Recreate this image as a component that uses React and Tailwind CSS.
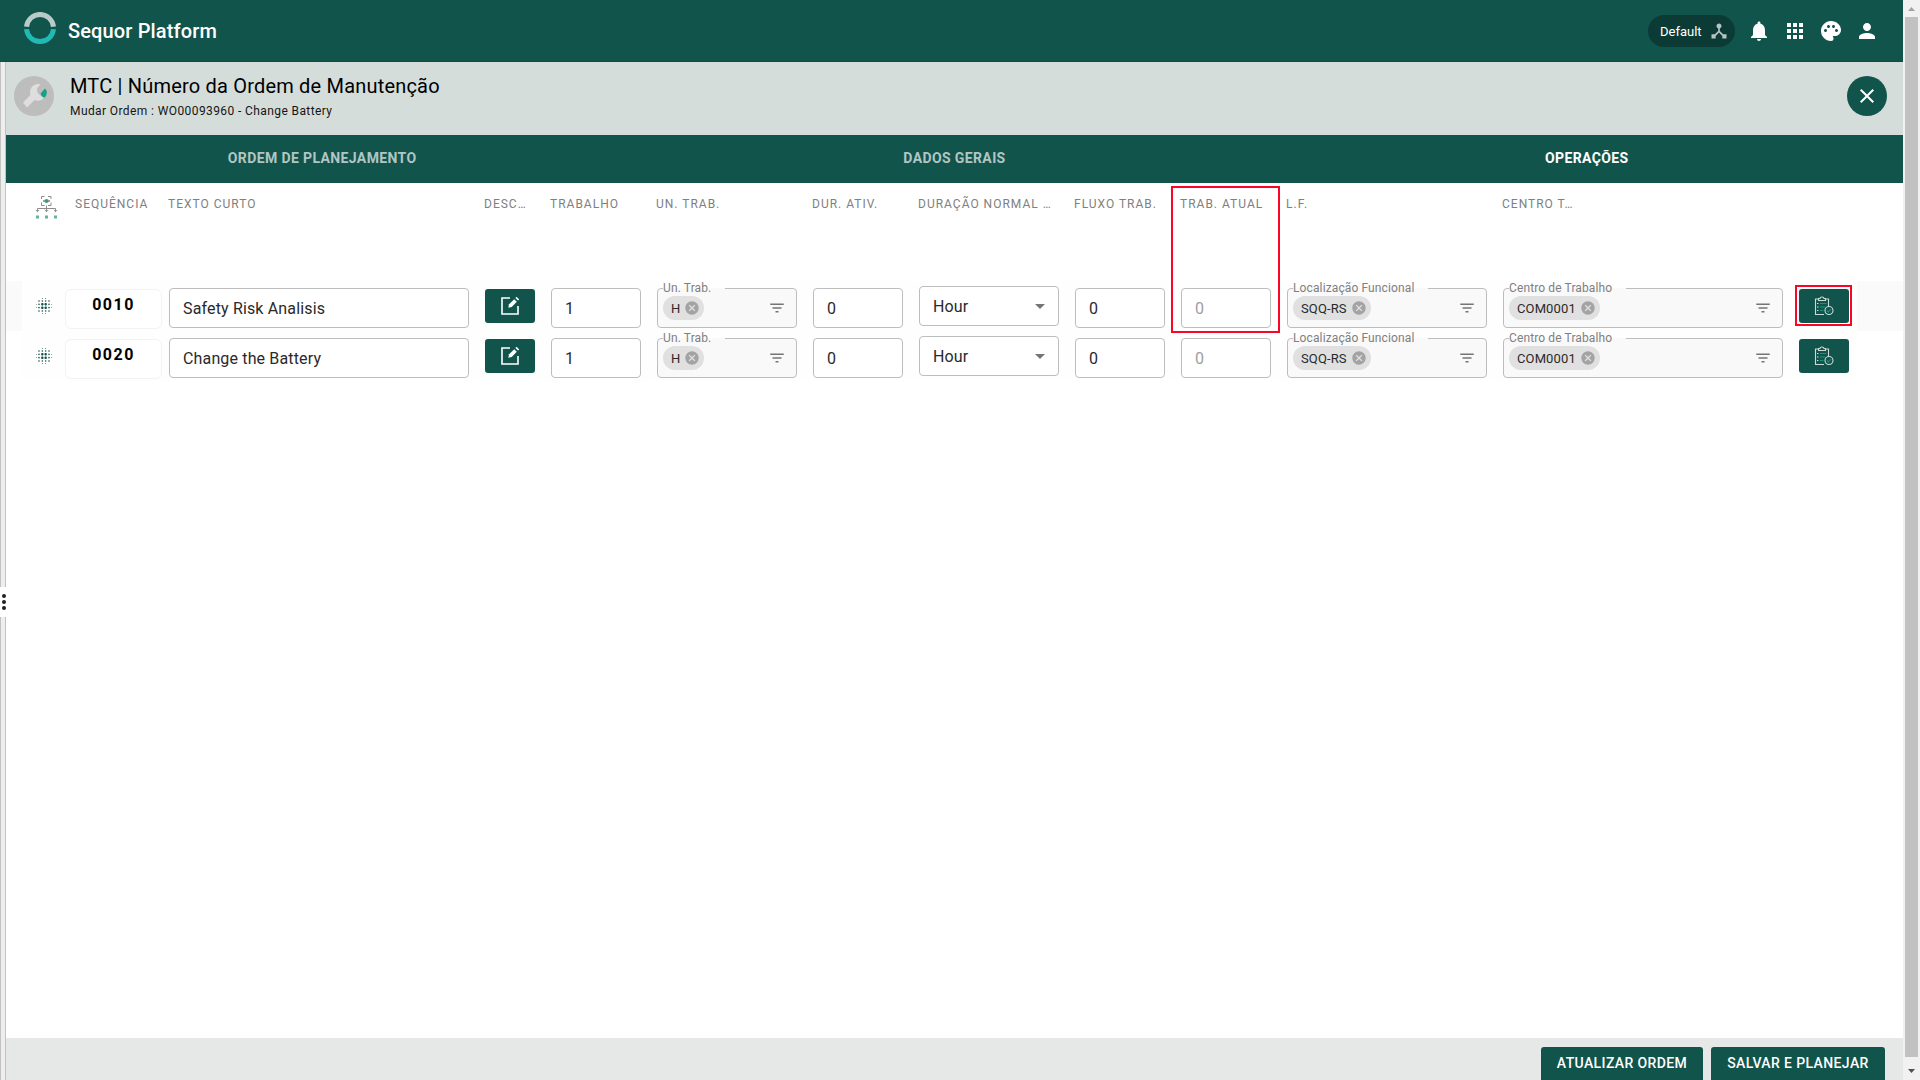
import React from "react";
import {
  MdDeviceHub, MdNotifications, MdApps, MdPalette, MdPerson, MdClose,
  MdFilterList, MdCancel, MdArrowDropDown, MdBlurOn,
} from "react-icons/md";

const columns = [
  { label: "SEQUÊNCIA", width: "w-[93px]" },
  { label: "TEXTO CURTO", width: "w-[316px]" },
  { label: "DESC…", width: "w-[66px]" },
  { label: "TRABALHO", width: "w-[106px]" },
  { label: "UN. TRAB.", width: "w-[156px]" },
  { label: "DUR. ATIV.", width: "w-[106px]" },
  { label: "DURAÇÃO NORMAL …", width: "w-[156px]" },
  { label: "FLUXO TRAB.", width: "w-[106px]" },
  { label: "TRAB. ATUAL", width: "w-[106px]", marked: true },
  { label: "L.F.", width: "w-[216px]" },
  { label: "CENTRO T…", width: "w-[280px]" },
];

const rows = [
  { seq: "0010", text: "Safety Risk Analisis", striped: true },
  { seq: "0020", text: "Change the Battery" },
];

function Logo() {
  return (
    <svg width="32" height="32" viewBox="0 0 32 32" fill="none" className="mt-3 ml-6 shrink-0 self-start" strokeWidth="5">
      <path d="M2.560 14.700A13.500 13.500 0 0 1 29.440 14.700" stroke="#b8cbc8" />
      <path d="M2.540 17.100A13.500 13.500 0 0 0 29.460 17.100" stroke="#20b9b3" />
    </svg>
  );
}

function WrenchIcon() {
  return (
    <svg width="40" height="40" viewBox="0 0 40 40" className="mt-3.5 ml-2 shrink-0">
      <circle cx="20" cy="20" r="20" fill="#bdbdbd" />
      <path d="M9 26.500 16.500 19C14.500 12.500 19.500 6.500 26.500 8.200L23 12.500l.6 4.500 4 3.500h3C28.500 24.500 24.500 25.500 20.500 24L13 31.500Z" fill="#dedede" />
      <path d="M31 12.500c2.500 2.500 2.500 6-.5 9.300-2.500-.8-3.700-2.400-3.900-4.300Z" fill="#10a386" />
    </svg>
  );
}

function HierarchyIcon() {
  return (
    <svg width="24" height="25" viewBox="0 0 24 25" fill="none" stroke="#8c8c8c" strokeWidth="1">
      <path d="M6.500 4V1.500h3M13 1.500h3V4M6.500 7.500v3h3M13 10.500h3v-3M11.500 10.500v3M2.500 16.500v-3h18v3M11.500 13.500v3" />
      <path d="m.8 15 1.700 1.700L4.200 15M9.800 15l1.700 1.700 1.700-1.700M18.800 15l1.700 1.700 1.700-1.700M8 6q3.500-3 7 0q-3.500 3-7 0" />
      <circle cx="11.500" cy="6" r="1.700" fill="#2f9e83" stroke="none" />
      <path d="M1 20.500h3v3H1ZM10 20.500h3v3h-3ZM19 20.500h3v3h-3Z" fill="#63b3a1" stroke="none" />
    </svg>
  );
}

function EditIcon() {
  return (
    <svg width="20" height="20" viewBox="0 0 20 20" fill="none">
      <path d="M10 2H2v16h16v-8" stroke="#fff" strokeWidth="1.600" />
      <path d="m8.300 11.700.8-3.400L14.200 3.200l2.600 2.600-5.100 5.100Z" fill="#fff" />
      <path d="m15.400 2 1.200-1.200 2.600 2.600L18 4.600Z" fill="#fff" />
    </svg>
  );
}

function ChecklistIcon() {
  return (
    <svg width="20" height="20" viewBox="0 0 20 20" fill="none" stroke="#c9d9d6" strokeWidth="1.100">
      <path d="M10 18.500H1.500V3H4M11.500 3H14.500V10M4.500 4.500V2.500H6q0-1.500 2-1.500t2 1.500h1.500v2Z" />
      <circle cx="15" cy="14.500" r="4" />
      <path d="M3 7.500h1.500M3 11h1.500M3 14.500h1.500" />
      <path d="M6 7.500h6.500M6 11h5M6 14.500h3.500" stroke="#16947f" />
      <path d="m13 14.500 1.500 1.500 2.500-3" stroke="#16947f" />
    </svg>
  );
}

const box = "h-10 shrink-0 rounded border border-[#bdbdbd] text-[16px] tracking-[0.15px]";

function Field({ value, width, muted }) {
  return (
    <div className={`${box} ${width} mt-[7px] mr-4 flex items-center bg-white pt-[2px] pl-[13px] ${muted ? "text-[#9e9e9e]" : "text-[#2a2a2a]"}`}>
      {value}
    </div>
  );
}

function ChipField({ label, value, width, gap }) {
  return (
    <div className={`${box} ${width} relative mt-[7px] mr-4 flex items-center justify-between bg-[#f9f9f9] pr-[10px] pl-[5px]`}>
      <div className={`absolute -top-[10px] left-[5px] h-[18px] text-[12px] leading-[18px] tracking-[0.12px] whitespace-nowrap text-[#808080] ${gap}`}>
        <div className="absolute top-[9px] left-0 h-px w-full bg-[#f9f9f9]" />
        <span className="relative">{label}</span>
      </div>
      <div className="flex h-6 items-center rounded-full bg-[#e0e0e0] pr-[4px] pl-2 text-[13px] tracking-[0.12px] text-[#2a2a2a]">
        <span className="pt-px">{value}</span>
        <MdCancel size={16} color="#a3a3a3" className="ml-1" />
      </div>
      <MdFilterList size={18} color="#757575" />
    </div>
  );
}

function Row({ row }) {
  return (
    <div className={`flex h-[50px] ${row.striped ? "bg-[#fafafa]" : "bg-white"}`}>
      <div className="ml-4 flex w-[1835px] bg-[#fefefe]">
        <div className="w-[43px] shrink-0 pt-[15px] pl-3">
          <MdBlurOn size={20} color="#11544c" />
        </div>
        <div className="mt-2 mr-[7px] h-10 w-[97px] shrink-0 rounded-md border border-[#f3f3f3] bg-white pt-[3px] text-center text-[16px] leading-6 font-bold tracking-[1.5px] text-black">
          {row.seq}
        </div>
        <Field value={row.text} width="w-[300px]" />
        <button className="mt-2 mr-4 flex h-[34px] w-[50px] shrink-0 items-center justify-center rounded-[3px] bg-[#11544c]">
          <EditIcon />
        </button>
        <Field value="1" width="w-[90px]" />
        <ChipField label="Un. Trab." value="H" width="w-[140px]" gap="w-[62px]" />
        <Field value="0" width="w-[90px]" />
        <div className={`${box} mt-[5px] mr-4 flex w-[140px] items-center justify-between bg-white pr-[6px] pl-[13px] text-[#2a2a2a]`}>
          <span className="pt-[2px]">Hour</span>
          <MdArrowDropDown size={24} color="#757575" />
        </div>
        <Field value="0" width="w-[90px]" />
        <Field value="0" width="w-[90px]" muted />
        <ChipField label="Localização Funcional" value="SQQ-RS" width="w-[200px]" gap="w-[135px]" />
        <ChipField label="Centro de Trabalho" value="COM0001" width="w-[280px]" gap="w-[117px]" />
        <div className="relative mt-2 h-[34px] w-[50px] shrink-0">
          <button className="flex h-full w-full items-center justify-center rounded-[3px] bg-[#11544c]">
            <ChecklistIcon />
          </button>
          {row.striped && <div className="absolute -top-1 -right-[3px] -bottom-[3px] -left-1 border-2 border-[#fb0428]" />}
        </div>
      </div>
    </div>
  );
}

export default function App() {
  return (
    <div className="flex h-[1080px] w-[1920px] overflow-hidden bg-white font-[Roboto,sans-serif]">
      <div className="flex w-[1903px] flex-col">
        <header className="flex h-[62px] shrink-0 items-center border-b border-[#0f4c45] bg-[#11544c]">
          <Logo />
          <h1 className="ml-3 text-[20px] font-medium tracking-[0.15px] text-white">Sequor Platform</h1>
          <div className="mr-6 ml-auto flex items-center gap-3 text-white">
            <div className="flex h-8 w-[87px] items-center justify-between rounded-full bg-[#0c3b35] pr-[6px] pl-[12px] text-[13px]">
              <span className="pt-[2px]">Default</span>
              <MdDeviceHub size={20} color="#b6c4c2" />
            </div>
            <div className="flex gap-3">
              <MdNotifications size={24} />
              <MdApps size={24} />
              <MdPalette size={24} />
              <MdPerson size={24} />
            </div>
          </div>
        </header>

        <div className="flex min-h-0 flex-1">
          <aside className="flex w-[6px] shrink-0 flex-col">
            <div className="h-[525px] border-r border-l border-[#c2c2c2] bg-[#eee]" />
            <div className="flex h-[30px] flex-col items-end gap-[2px] pt-[7px]">
              <i className="h-1 w-1 rounded-full bg-[#222]" />
              <i className="h-1 w-1 rounded-full bg-[#222]" />
              <i className="h-1 w-1 rounded-full bg-[#222]" />
            </div>
            <div className="flex-1 border-r border-l border-[#c2c2c2] bg-[#eee]" />
          </aside>

          <main className="flex w-[1897px] flex-col">
            <section className="flex h-[73px] shrink-0 bg-[#d5ddda]">
              <WrenchIcon />
              <div className="ml-4 pt-2 text-black">
                <h2 className="text-[20px] leading-8 font-normal tracking-[0.19px]">MTC | Número da Ordem de Manutenção</h2>
                <p className="pt-px text-[12px] leading-4 tracking-[0.4px] text-[#151515]">Mudar Ordem : WO00093960 - Change Battery</p>
              </div>
              <button className="mt-3.5 mr-4 ml-auto flex h-10 w-10 items-center justify-center rounded-full bg-[#11544c]">
                <MdClose size={24} color="#fff" />
              </button>
            </section>

            <nav className="grid h-12 shrink-0 grid-cols-3 items-center bg-[#11544c] pb-[2px] text-center text-[14px] font-bold tracking-[0.38px] text-[#b1c6c3]">
              <span>ORDEM DE PLANEJAMENTO</span>
              <span>DADOS GERAIS</span>
              <span className="text-white">OPERAÇÕES</span>
            </nav>

            <section className="flex-1">
              <div className="flex h-[98px]">
                <div className="w-[69px] shrink-0 pt-3 pl-[29px]">
                  <HierarchyIcon />
                </div>
                {columns.map((c) => (
                  <div key={c.label} className={`${c.width} relative shrink-0 pt-[13px] text-[12px] leading-4 tracking-[1px] whitespace-nowrap text-[#808080]`}>
                    {c.label}
                    {c.marked && <div className="absolute top-[3px] -left-[9px] z-10 h-[147px] w-[109px] border-2 border-[#fb0428]" />}
                  </div>
                ))}
              </div>
              {rows.map((r) => <Row key={r.seq} row={r} />)}
            </section>

            <footer className="flex h-[42px] shrink-0 justify-end gap-2 bg-[#e6e8e7] pt-[9px] pr-[18px] text-[14px] font-medium tracking-[0.38px] text-white">
              <button className="h-9 w-[162px] rounded-[3px] bg-[#11544c] pb-[3px]">ATUALIZAR ORDEM</button>
              <button className="h-9 w-[174px] rounded-[3px] bg-[#11544c] pb-[3px]">SALVAR E PLANEJAR</button>
            </footer>
          </main>
        </div>
      </div>

      <div className="flex w-[17px] flex-col items-center justify-between bg-[#f1f1f1]">
        <svg width="17" height="17" viewBox="0 0 17 17"><path d="M5 11h7L8.500 7Z" fill="#a3a3a3" /></svg>
        <div className="w-[13px] flex-1 bg-[#c1c1c1]" />
        <svg width="17" height="23" viewBox="0 0 17 23"><path d="M5 12h7l-3.500 4Z" fill="#505050" /></svg>
      </div>
    </div>
  );
}
